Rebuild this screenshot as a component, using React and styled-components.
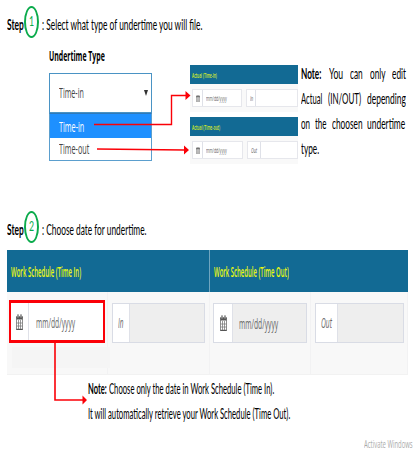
import React, { useLayoutEffect, useRef, useState } from "react";
import styled, { createGlobalStyle } from "styled-components";

const Global = createGlobalStyle`
  *, *::before, *::after { box-sizing: border-box; }
  body { margin: 0; background: #fff; }
`;

const humanist = 'Lato, "Open Sans", sans-serif';
const ui = '"Open Sans", "Noto Sans", sans-serif';

const Slot = styled.span`
  display: block;
  flex: none;
  width: ${(p) => p.$w}px;
  height: ${(p) => p.$lh}px;
  line-height: ${(p) => p.$lh}px;
  font-family: ${(p) => (p.$ui ? ui : humanist)};
  font-size: ${(p) => p.$size}px;
  font-weight: ${(p) => p.$weight || 400};
  font-style: ${(p) => (p.$italic ? "italic" : "normal")};
  color: ${(p) => p.$color || "#000"};
  white-space: nowrap;
`;

const Squeeze = styled.span`
  display: inline-block;
  transform-origin: 0 50%;
  vertical-align: top;
`;

/* Condenses a line of type horizontally to the given width. */
function Fit({ w, size = 15.8, lh = 20, weight, italic, color, sans, children }) {
  const ref = useRef(null);
  const [scale, setScale] = useState(1);
  useLayoutEffect(() => {
    setScale(w / ref.current.offsetWidth);
  }, [w, size, children]);
  return (
    <Slot $w={w} $size={size} $lh={lh} $weight={weight} $italic={italic} $color={color} $ui={sans}>
      <Squeeze ref={ref} style={{ transform: `scaleX(${scale})` }}>{children}</Squeeze>
    </Slot>
  );
}

const Page = styled.main`
  position: relative;
  width: 420px;
  height: 450px;
  overflow: hidden;
  display: flex;
  flex-direction: column;
  background: #fff;

  > * { flex: none; }
`;

const StepRow = styled.header`
  display: flex;
  align-items: flex-start;
  height: 32px;
  margin: ${(p) => p.$top}px 0 0 6.5px;
`;

const StepText = styled.div`
  padding-top: 8px;
  margin-left: ${(p) => p.$left || 0}px;
`;

const StepBadge = styled.div`
  display: flex;
  justify-content: center;
  width: 15px;
  height: 32px;
  margin-left: 0.5px;
  padding-top: 4px;
  border: 2px solid #0bab4c;
  border-radius: 50%;
`;

const TypeArea = styled.section`
  display: flex;
  height: 156px;
  padding-left: 49px;
`;

const Chooser = styled.div`
  width: 103px;
  padding-top: 8px;
  margin-right: 38px;
`;

const SelectBox = styled.div`
  display: flex;
  align-items: center;
  justify-content: space-between;
  width: 103px;
  height: 40px;
  margin-top: 7px;
  padding: 0 3px 0 9px;
  border: 1px solid #4a93c4;
  background: #fff;
`;

const Caret = styled.span`
  border: 2.5px solid transparent;
  border-top: 6px solid #333;
  border-bottom: 0;
`;

const Options = styled.div`
  border: 1px solid #5b9fce;
  border-top-color: #2f79b9;
`;

const Option = styled.div`
  display: flex;
  align-items: center;
  height: ${(p) => (p.$active ? 24 : 22)}px;
  padding-left: 9px;
  padding-top: ${(p) => (p.$active ? 1 : 0)}px;
  background: ${(p) => (p.$active ? "#1e90ff" : "#fff")};
`;

const Panels = styled.div`
  display: flex;
  flex-direction: column;
  gap: 5px;
  width: 108px;
  padding-top: 27px;
`;

const Panel = styled.div`
  height: 47px;
  background: #f9f9f9;
`;

const PanelHead = styled.div`
  display: flex;
  align-items: center;
  height: 19px;
  padding-left: 2px;
  background: #126a94;
`;

const PanelBody = styled.div`
  display: flex;
  gap: 4px;
  padding: 5px 0 0 2px;
`;

const Field = styled.div`
  display: flex;
  align-items: stretch;
  flex: none;
  width: ${(p) => p.$w}px;
  height: ${(p) => p.$h}px;
  background: ${(p) => (p.$disabled ? "#eee" : "#fff")};
  border: 1px solid ${(p) => (p.$small ? "#e6e7ec" : "#d9dce5")};
  ${(p) => p.$marked && "border: 3px solid #fb0007; border-width: 3px 2.5px;"}
`;

const Addon = styled.div`
  display: flex;
  align-items: center;
  justify-content: center;
  flex: none;
  width: ${(p) => p.$w}px;
  background: #fff;
  border-right: 1px solid #dfe1e8;
`;

const Value = styled.div`
  display: flex;
  align-items: center;
  padding-left: ${(p) => p.$pad}px;
  padding-top: ${(p) => p.$drop || 0}px;
`;

const Note = styled.div`
  display: flex;
  flex-direction: column;
  width: 105px;
  margin-left: 3px;
  padding-top: 22px;
`;

const NoteLine = styled.div`
  display: flex;
  align-items: center;
  justify-content: space-between;
  height: 25.2px;
`;

const Table = styled.section`
  display: grid;
  grid-template-columns: 203px 198px;
  grid-template-rows: 42px 83px;
  width: 401px;
  margin: 7px 0 0 6.5px;
`;

const HeadCell = styled.div`
  display: flex;
  align-items: center;
  padding: 2px 0 0 4px;
  background: #126a94;
  border-right: ${(p) => (p.$split ? "1px solid #6fa5bf" : "0")};
`;

const BodyCell = styled.div`
  display: grid;
  grid-template-columns: ${(p) => p.$cols};
  background: #f8f8f8;
  border-bottom: 1px solid #f2f2f2;
`;

const Cell = styled.div`
  padding: ${(p) => p.$top}px 0 0 ${(p) => p.$left}px;
  border-right: 1px solid #f2f2f3;
`;

const Patch = styled.div`
  width: 98px;
  height: 21px;
  margin: 4px 0 0 3px;
  background: #f5f5f5;
`;

const Footnote = styled.section`
  display: flex;
  flex-direction: column;
  gap: 4.5px;
  padding: 3px 0 0 88px;
`;

const FootLine = styled.div`
  display: flex;
  gap: 2px;
`;

const Watermark = styled.footer`
  display: flex;
  margin: 14.5px 0 0 363.5px;
`;

const Arrows = styled.svg`
  position: absolute;
  inset: 0;
  pointer-events: none;
`;

const CalendarIcon = ({ w, h }) => (
  <svg width={w} height={h} viewBox="0 0 14 16" preserveAspectRatio="none">
    <path d="M1 3h12v12.4H1z" fill="#fff" stroke="#555" strokeWidth="1.3" />
    <path d="M1 3h12v2.5H1z" fill="#555" />
    <path d="M5 6v9M9 6v9M1 9h12M1 12h12" stroke="#777" strokeWidth="1" />
    <path d="M4 0.4v4M10 0.4v4" stroke="#555" strokeWidth="3" />
    <path d="M4 1.2v2.4M10 1.2v2.4" stroke="#ddd" strokeWidth="1" />
  </svg>
);

function ActualPanel({ title, titleW, tag, dateW, tagW, tagAddon, tagTextW }) {
  return (
    <Panel>
      <PanelHead>
        <Fit w={titleW} size={7.5} lh={10} weight={600} color="#dcf022" sans>{title}</Fit>
      </PanelHead>
      <PanelBody>
        <Field $w={dateW} $h={18} $small>
          <Addon $w={10}><CalendarIcon w={4} h={7} /></Addon>
          <Value $pad={3}><Fit w={21} size={8} lh={10} color="#666" sans>mm/dd/yyyy</Fit></Value>
        </Field>
        <Field $w={tagW} $h={18} $small>
          <Addon $w={tagAddon}><Fit w={tagTextW} size={7.5} lh={10} italic color="#666" sans>{tag}</Fit></Addon>
        </Field>
      </PanelBody>
    </Panel>
  );
}

function DateField({ w, h, addon, pad, marked, disabled }) {
  return (
    <Field $w={w} $h={h} $marked={marked} $disabled={disabled}>
      <Addon $w={addon}><CalendarIcon w={7} h={16} /></Addon>
      <Value $pad={pad} $drop={2}><Fit w={39} size={14.5} color="#666" sans>mm/dd/yyyy</Fit></Value>
    </Field>
  );
}

function TagField({ w, addon, textW, children }) {
  return (
    <Field $w={w} $h={40} $disabled>
      <Addon $w={addon}><Fit w={textW} size={14} italic color="#666" sans>{children}</Fit></Addon>
    </Field>
  );
}

const noteLines = [
  [["Note:", 20.5, 700], ["You", 14], ["can", 13], ["only", 15.5], ["edit", 14]],
  [["Actual", 21.5], ["(IN/OUT)", 33], ["depending", 39]],
  [["on", 9], ["the", 11.5], ["choosen", 30.5], ["undertime", 38.5]],
  [["type.", 18]],
];

function Step({ top, number, text, width }) {
  return (
    <StepRow $top={top}>
      <StepText><Fit w={17} weight={700}>Step</Fit></StepText>
      <StepBadge><Fit w={5} size={14} lh={17} color="#0bab4c">{number}</Fit></StepBadge>
      <StepText $left={2.5}><Fit w={width}>{text}</Fit></StepText>
    </StepRow>
  );
}

export default function App() {
  return (
    <Page>
      <Global />
      <Step top={6} number="1" text=": Select what type of undertime you will file." width={160.5} />
      <TypeArea>
        <Chooser>
          <Fit w={56} size={14.5} weight={700} sans>Undertime Type</Fit>
          <SelectBox>
            <Fit w={25} size={14} color="#444" sans>Time-in</Fit>
            <Caret />
          </SelectBox>
          <Options>
            <Option $active><Fit w={25.5} size={14} color="#fff" sans>Time-in</Fit></Option>
            <Option><Fit w={30.5} size={14} color="#444" sans>Time-out</Fit></Option>
          </Options>
        </Chooser>
        <Panels>
          <ActualPanel title="Actual (Time-in)" titleW={25} tag="In" dateW={50} tagW={52} tagAddon={9} tagTextW={3} />
          <ActualPanel title="Actual (Time-out)" titleW={28} tag="Out" dateW={51} tagW={51} tagAddon={13} tagTextW={6} />
        </Panels>
        <Note>
          {noteLines.map((line, i) => (
            <NoteLine key={i}>
              {line.map(([word, w, weight]) => (
                <Fit key={word} w={w} size={16} weight={weight}>{word}</Fit>
              ))}
            </NoteLine>
          ))}
        </Note>
      </TypeArea>
      <Step top={17} number="2" text=": Choose date for undertime." width={104.5} />
      <Table>
        <HeadCell $split><Fit w={70} size={14} weight={600} color="#ecfa10" sans>Work Schedule (Time In)</Fit></HeadCell>
        <HeadCell><Fit w={75} size={14} weight={600} color="#ecfa10" sans>Work Schedule (Time Out)</Fit></HeadCell>
        <BodyCell $cols="101px 102px">
          <Cell $top={8} $left={2.5}>
            <DateField w={96} h={43} addon={18} pad={7} marked />
            <Patch />
          </Cell>
          <Cell $top={11} $left={4.5}><TagField w={93} addon={17} textW={5.5}>In</TagField></Cell>
        </BodyCell>
        <BodyCell $cols="101px 97px">
          <Cell $top={11} $left={3.5}><DateField w={94} h={40} addon={19} pad={6} disabled /></Cell>
          <Cell $top={11} $left={4}><TagField w={89} addon={22} textW={11}>Out</TagField></Cell>
        </BodyCell>
      </Table>
      <Footnote>
        <FootLine>
          <Fit w={18.5} weight={700}>Note:</Fit>
          <Fit w={165}>Choose only the date in Work Schedule (Time In).</Fit>
        </FootLine>
        <FootLine><Fit w={202}>It will automatically retrieve your Work Schedule (Time Out).</Fit></FootLine>
      </Footnote>
      <Watermark><Fit w={48.5} size={11.5} lh={13} color="#aaa" sans>Activate Windows</Fit></Watermark>
      <Arrows width="420" height="450" viewBox="0 0 420 450" fill="none" stroke="#fb0007" strokeWidth="1.4">
        <path d="M94 124.5H171.5V95.5H186" />
        <path d="M97 149L184 150" />
        <path d="M55 343V400H83" strokeWidth="1.6" />
        <path d="M185.5 91l5 4.5-5 4.5zM184 145.5l5 4.5-5 4.5zM82.5 395.5l4.5 4.5-4.5 4.5z" fill="#fb0007" stroke="none" />
      </Arrows>
    </Page>
  );
}
